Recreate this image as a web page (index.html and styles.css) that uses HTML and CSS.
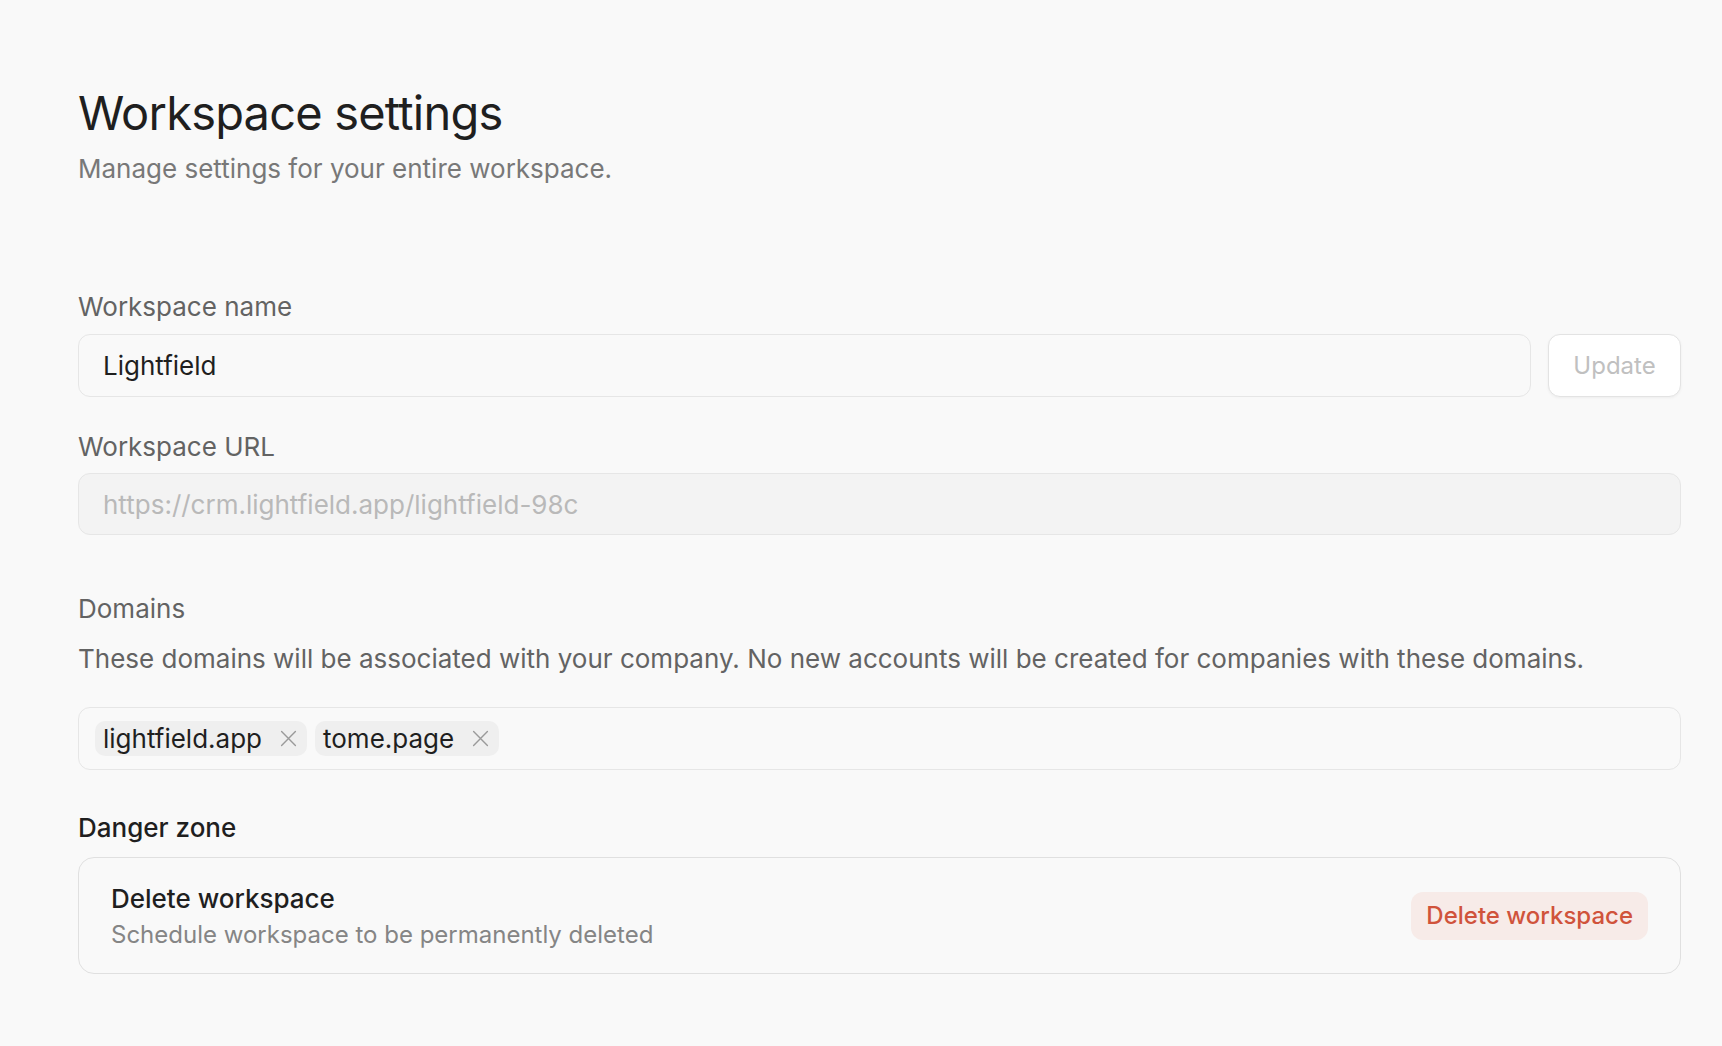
FILE: index.html
```html
<!DOCTYPE html>
<html lang="en">
<head>
    <meta charset="UTF-8">
    <meta name="viewport" content="width=device-width, initial-scale=1.0">
    <title>Workspace settings</title>
    <link rel="stylesheet" href="styles.css">
</head>
<body>

    <main class="page">
        <!-- Header -->
        <header class="page-head">
            <h1 class="page-title">Workspace settings</h1>
            <p class="page-sub">Manage settings for your entire workspace.</p>
        </header>

        <!-- Workspace name -->
        <section class="field field-name">
            <label class="field-label" for="ws-name">Workspace name</label>
            <div class="name-row">
                <input class="text-input" id="ws-name" type="text" value="Lightfield">
                <button class="update-btn" disabled>Update</button>
            </div>
        </section>

        <!-- Workspace URL (read only) -->
        <section class="field field-url">
            <label class="field-label" for="ws-url">Workspace URL</label>
            <input class="text-input is-disabled" id="ws-url" type="text" placeholder="https://crm.lightfield.app/lightfield-98c" disabled>
        </section>

        <!-- Domains -->
        <section class="field field-domains">
            <div class="field-label">Domains</div>
            <p class="field-help">These domains will be associated with your company. No new accounts will be created for companies with these domains.</p>
            <div class="chip-input">
                <span class="chip">lightfield.app
                    <svg class="chip-x" viewBox="0 0 16 16" width="17" height="17"><path d="M1.5 1.5l13 13M14.5 1.5l-13 13" stroke="currentColor" stroke-width="1.3" stroke-linecap="round" fill="none"/></svg>
                </span>
                <span class="chip">tome.page
                    <svg class="chip-x" viewBox="0 0 16 16" width="17" height="17"><path d="M1.5 1.5l13 13M14.5 1.5l-13 13" stroke="currentColor" stroke-width="1.3" stroke-linecap="round" fill="none"/></svg>
                </span>
            </div>
        </section>

        <!-- Danger zone -->
        <section class="danger">
            <h2 class="danger-title">Danger zone</h2>
            <div class="danger-card">
                <div class="danger-text">
                    <div class="danger-name">Delete workspace</div>
                    <div class="danger-desc">Schedule workspace to be permanently deleted</div>
                </div>
                <button class="delete-btn">Delete workspace</button>
            </div>
        </section>
    </main>

</body>
</html>
```

FILE: styles.css
```css
body {
    margin: 0;
    background-color: #f9f9f9;
    font-family: "Inter", "Noto Sans", sans-serif;
    color: #1f1f1f;
}

/* Main column */
.page {
    padding: 84px 41px 40px 78px;
}

.page-title {
    margin: 0;
    font-size: 47px;
    line-height: 58px;
    font-weight: 400;
    letter-spacing: -0.8px;
    color: #1f1f1f;
}

.page-sub {
    margin: 10px 0 0;
    font-size: 26px;
    line-height: 34px;
    color: #787878;
}

/* Form fields */
.field-label {
    display: block;
    font-size: 26px;
    line-height: 32px;
    color: #636363;
    margin-bottom: 11px;
}

.field-name {
    margin-top: 105px;
}

.field-url {
    margin-top: 34px;
}

.field-url .field-label {
    margin-bottom: 10px;
}

.field-domains {
    margin-top: 58px;
}

.field-domains .field-label {
    margin-bottom: 10px;
}

.name-row {
    display: flex;
    gap: 17px;
}

.text-input {
    box-sizing: border-box;
    flex: 1;
    width: 100%;
    height: 63px;
    padding: 0 24px;
    border: 1px solid #e6e6e6;
    border-radius: 12px;
    background: #f9f9f9;
    font-family: inherit;
    font-size: 26px;
    color: #1f1f1f;
    outline: none;
}

.text-input.is-disabled {
    height: 62px;
    background: #f3f3f3;
}

.text-input::placeholder {
    color: #b9b9b9;
}

.update-btn {
    box-sizing: border-box;
    width: 133px;
    height: 63px;
    border: 1px solid #e3e3e3;
    border-radius: 12px;
    background: #ffffff;
    box-shadow: 0 1px 3px rgba(0, 0, 0, 0.05);
    font-family: inherit;
    font-size: 24px;
    color: #c0c0c0;
}

.field-help {
    margin: 17px 0 31px;
    font-size: 26px;
    line-height: 34px;
    color: #636363;
}

/* Domain chips */
.chip-input {
    box-sizing: border-box;
    height: 63px;
    display: flex;
    align-items: center;
    gap: 8px;
    padding: 0 16px;
    border: 1px solid #e6e6e6;
    border-radius: 12px;
}

.chip {
    display: flex;
    align-items: center;
    gap: 18px;
    height: 35px;
    padding: 0 10px 0 8px;
    border-radius: 10px;
    background: #efefef;
    font-size: 26px;
    color: #1f1f1f;
}

.chip-x {
    color: #9a9a9a;
}

/* Danger zone */
.danger {
    margin-top: 42px;
}

.danger-title {
    margin: 0 0 13px;
    font-size: 26px;
    line-height: 32px;
    font-weight: 500;
    color: #1f1f1f;
}

.danger-card {
    box-sizing: border-box;
    display: flex;
    align-items: center;
    justify-content: space-between;
    height: 117px;
    padding: 0 32px;
    border: 1px solid #e0e0e0;
    border-radius: 16px;
}

.danger-text {
    padding-top: 2px;
}

.danger-name {
    font-size: 26px;
    line-height: 36px;
    font-weight: 500;
    color: #1f1f1f;
}

.danger-desc {
    font-size: 24px;
    line-height: 36px;
    color: #858585;
}

.delete-btn {
    height: 48px;
    padding: 0 15px;
    border: none;
    border-radius: 12px;
    background: #f7ebe8;
    font-family: inherit;
    font-size: 24px;
    font-weight: 500;
    color: #d0533b;
}
```
